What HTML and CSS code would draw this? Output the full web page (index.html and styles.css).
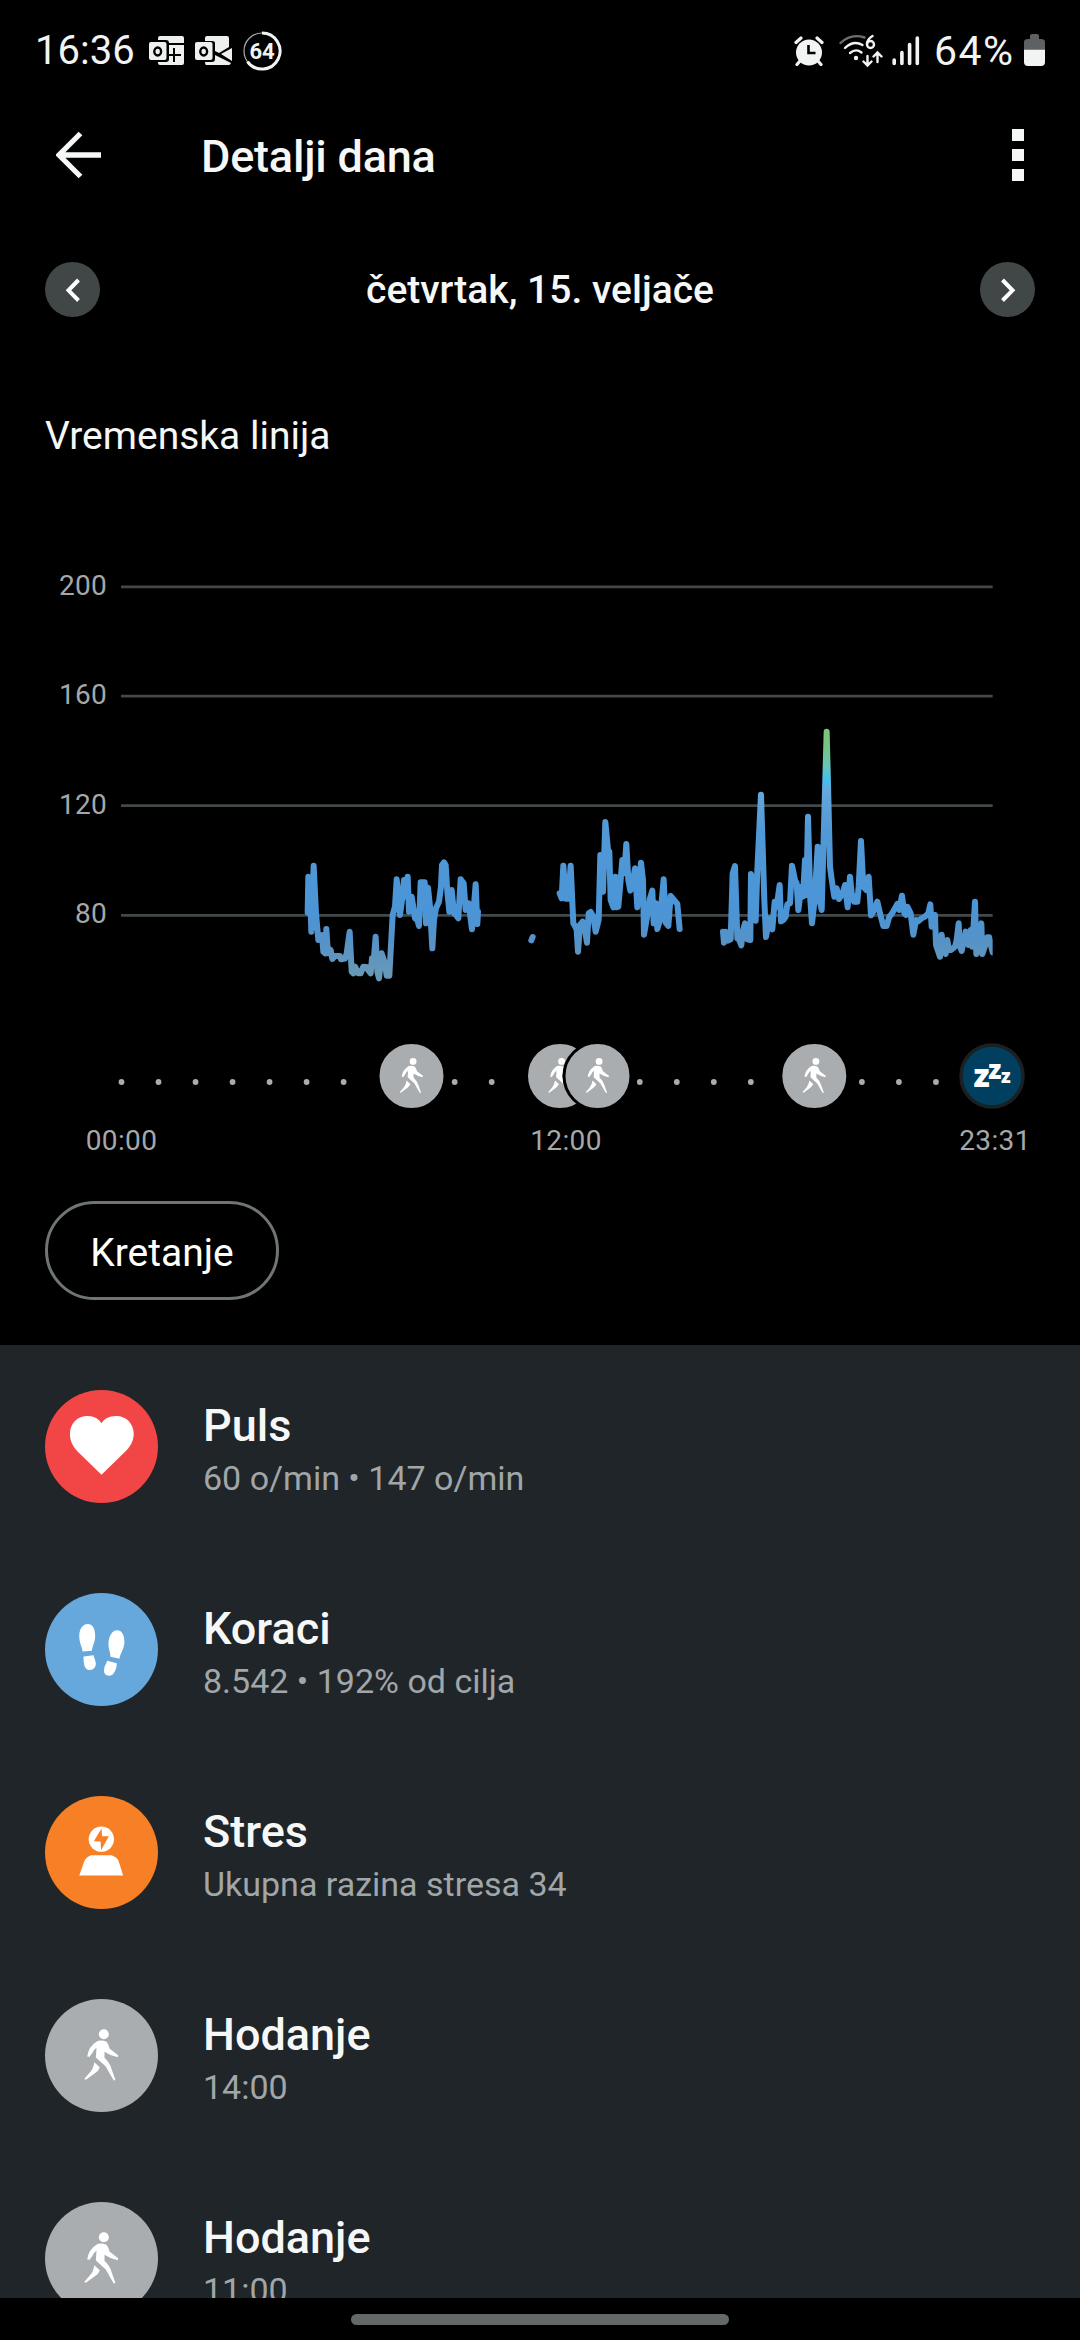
FILE: index.html
```html
<!DOCTYPE html>
<html lang="hr">
<head>
  <meta charset="UTF-8">
  <meta name="viewport" content="width=device-width, initial-scale=1.0">
  <title>Detalji dana</title>
  <link rel="stylesheet" href="styles.css">
</head>
<body>
  <!-- shared icons -->
  <svg class="defs" width="0" height="0">
    <symbol id="walk" viewBox="234 796 140 180">
      <circle cx="311" cy="822" r="15"/>
      <path d="M292 842 Q306 839 319 845 Q325 852 328 865 L354 885 L353 891 Q332 888 313 875 L313 893 Q329 908 334 926 L346 960 L341 961 Q331 945 317 919 L287 892 L289 863 Q279 870 276 879 L268 890 L261 889 Q263 875 269 864 Q278 850 292 842Z"/>
      <path d="M282 906 L299 921 Q295 932 285 939 L257 959 L252 957 L270 936 Q280 925 282 906Z"/>
    </symbol>
  </svg>

  <div class="status-bar">
    <div class="status-left">
      <span class="clock">16:36</span>
      <svg class="outlook" width="36" height="30" viewBox="0 0 36 30">
        <path fill="#eef0f0" d="M11 0h22q2 0 2 2v5H20q0-3-3-3H9V2q0-2 2-2zM20 9h15v18q0 2-2 2H11q-2 0-2-2v-1h8q3 0 3-3z"/>
        <rect x="0" y="6" width="17.500" height="18" rx="2" fill="#eef0f0"/>
        <path d="M25 12v14M19 19h13" stroke="#000" stroke-width="2"/>
        <ellipse cx="8.700" cy="15.500" rx="3.400" ry="4" fill="none" stroke="#000" stroke-width="2.400"/>
      </svg>
      <svg class="outlook" width="38" height="30" viewBox="0 0 38 30">
        <path fill="#eef0f0" d="M12 0h20q2 0 2 2v9l-10 6-4-2V7q0-2-3-2H10V2q0-2 2-2zM37 12v13l-11-7zM20 19l16 8q-1 2-2 2H11q-1 0-1-3h7q3 0 3-3z"/>
        <rect x="0" y="6" width="17.500" height="18" rx="2" fill="#eef0f0"/>
        <ellipse cx="8.700" cy="15.500" rx="3.400" ry="4" fill="none" stroke="#000" stroke-width="2.400"/>
      </svg>
      <svg class="ring" width="40" height="40" viewBox="0 0 40 40">
        <circle cx="20" cy="20" r="18" fill="none" stroke="#aaa" stroke-width="1.200"/>
        <path d="M20 2A18 18 0 1 1 5.400 30.500" fill="none" stroke="#f2f4f4" stroke-width="3"/>
        <text class="ring-text" x="20" y="28" text-anchor="middle">64</text>
      </svg>
    </div>
    <div class="status-right">
      <svg class="alarm" width="30" height="30" viewBox="0 0 30 30">
        <circle cx="15" cy="16.500" r="13" fill="#f2f4f4"/>
        <path d="M2 6.500l5-4.500M28 6.500l-5-4.500M6 25l-3 3.500M24 25l3 3.500" stroke="#f2f4f4" stroke-width="3.200" stroke-linecap="round"/>
        <path d="M14.500 9v8h7" fill="none" stroke="#000" stroke-width="2.600"/>
      </svg>
      <svg class="wifi" width="44" height="34" viewBox="0 0 44 34">
        <g fill="none" stroke="#f2f4f4" stroke-width="2.400" stroke-linecap="round">
          <path d="M1.500 9Q12-1 25.500 3.500" stroke="#6b6f71"/>
          <path d="M6 14Q14.500 6 23.500 11"/>
          <path d="M11 19Q17 14 22.500 18.500"/>
          <path d="M28.500 22v9M24.500 27.500l4 4 4-4M38.500 28v-9M34.500 22.500l4-4 4 4"/>
          <path d="M33.500 2Q28 5.500 28 10"/>
          <circle cx="31.500" cy="10.500" r="3.500"/>
        </g>
        <circle cx="17" cy="24" r="2.200" fill="#f2f4f4"/>
      </svg>
      <svg class="signal" width="28" height="30" viewBox="0 0 28 30">
        <path d="M2.200 24v3.500M9.900 16.500v11M17.600 8.500v19M25.300 2v25.500" stroke="#f2f4f4" stroke-width="3.600" stroke-linecap="round"/>
      </svg>
      <span class="percent">64%</span>
      <svg class="battery" width="21" height="32" viewBox="0 0 21 32">
        <path d="M6 5V2q0-2 2-2h5q2 0 2 2v3h2q4 0 4 3v8H0V8q0-3 4-3z" fill="#5d6163"/>
        <path d="M0 15.700h21V28q0 4-4 4H4q-4 0-4-4z" fill="#f2f4f4"/>
      </svg>
    </div>
  </div>

  <header class="app-bar">
    <svg width="46" height="48" viewBox="0 0 46 48">
      <path d="M24.500 2.500L3 24l21.500 21.500M3 24h42" fill="none" stroke="#f6f7f7" stroke-width="5.300"/>
    </svg>
    <h1>Detalji dana</h1>
    <div class="menu"><i></i><i></i><i></i></div>
  </header>

  <div class="day-nav">
    <button class="nav-btn">
      <svg width="55" height="56" viewBox="0 0 55 56"><path d="M33.500 18L23.500 28.300l10 10.200" fill="none" stroke="#fff" stroke-width="4"/></svg>
    </button>
    <h2>četvrtak, 15. veljače</h2>
    <button class="nav-btn">
      <svg width="55" height="56" viewBox="0 0 55 56"><path d="M22.500 18l10 10.300-10 10.200" fill="none" stroke="#fff" stroke-width="4"/></svg>
    </button>
  </div>

  <h3 class="section-title">Vremenska linija</h3>

  <svg class="chart" width="1080" height="650" viewBox="0 0 1080 650">
    <defs>
      <linearGradient id="pulse" gradientUnits="userSpaceOnUse" x1="0" y1="90" x2="0" y2="840">
        <stop offset="0" stop-color="#80c47a"/>
        <stop offset="0.060" stop-color="#75c57f"/>
        <stop offset="0.140" stop-color="#66c8b6"/>
        <stop offset="0.200" stop-color="#45c0ee"/>
        <stop offset="0.240" stop-color="#66a8dc"/>
        <stop offset="0.400" stop-color="#5198d6"/>
        <stop offset="0.730" stop-color="#4b95d6"/>
        <stop offset="0.840" stop-color="#5592c8"/>
        <stop offset="0.960" stop-color="#6698b8"/>
      </linearGradient>
      <clipPath id="plot"><rect x="0" y="0" width="2978" height="900"/></clipPath>
    </defs>

    <path class="grid" d="M121 66.800H992.700M121 176.200H992.700M121 285.700H992.700M121 395.300H992.700"/>
    <g class="y-labels">
      <text x="107" y="74.500">200</text>
      <text x="107" y="184">160</text>
      <text x="107" y="293.500">120</text>
      <text x="107" y="402.700">80</text>
    </g>

    <!-- heart rate, one path per uninterrupted measurement -->
    <g transform="translate(0 180) scale(0.33333)" clip-path="url(#plot)">
      <g class="rate">
        <path transform="translate(870 0)" d="M53 638L55 530L60 560L64 695L71 497L78 640L85 720L90 718L96 705L100 755L106 760L109 687L114 760L122 750L127 777L135 768L150 768L153 778L165 776L170 760L179 695L185 815L190 820L195 800L205 820L212 820L220 800L232 802L234 810L242 820L246 775L250 795L257 710L262 815L267 835L275 760L285 790L290 827L298 827L308 645L315 620L320 538L330 645L336 600L342 540L348 590L353 530L357 635L365 590L375 655L382 660L387 678L392 547L404 547L408 670L414 563L420 620L427 745L432 660L438 625L447 605L453 560L456 495L462 487L467 495L472 575L478 635L485 570L492 640L498 645L505 655L512 538L521 550L527 630L536 610L546 688L557 553L562 672L564 635"/>
        <path transform="translate(1500 0)" d="M94 721L98 711M179 580L185 595L190 497L197 596L205 596L212 497L220 670L226 680L230 690L234 755L240 675L248 665L255 690L261 728L266 640L272 636L280 650L287 695L296 660L301 465L309 575L316 366L325 460L328 455L332 600L340 622L346 530L350 622L355 620L362 540L367 480L373 520L379 432L385 540L391 572L398 550L405 505L412 622L423 488L429 540L432 704L438 670L450 595L457 572L461 670L468 610L472 687L480 660L491 538L497 668L505 678L512 588L522 600L532 612L539 687"/>
        <path transform="translate(2100 0)" d="M69 695L72 728L77 695L83 722L92 718L98 520L105 498L112 715L118 720L124 736L128 695L135 670L142 718L151 720L153 522L160 560L167 662L172 510L183 284L193 600L198 711L208 655L217 688L224 605L230 620L239 555L243 664L250 660L257 650L262 613L270 610L276 497L285 540L290 550L295 630L304 560L309 590L315 480L319 585L324 350L331 600L336 670L344 600L353 440L359 600L365 630L380 95L384 250L390 500L396 545L403 590L410 565L417 597L428 580L435 555L443 622L450 530L455 580L462 605L472 605L476 560L483 423L490 560L499 570L506 530L513 646L520 635L532 605L540 640L550 678L560 678L568 650L575 642L585 625L592 612L598 630L606 587L613 640L618 645L622 620L632 640L640 704L648 660L655 664L665 655L675 650L685 640L691 613L695 680L705 645L708 735L720 770L725 704L730 755L737 762L742 720L747 750L753 750L765 740L770 720L776 670L779 735L785 753L797 695L805 735L812 690L817 740L825 605L829 762L838 700L844 670L847 762L856 735L862 712L868 712L875 745L878 757"/>
      </g>
    </g>

    <!-- hour dots -->
    <path class="dots" d="M121.500 562H975"/>

    <g class="marker">
      <circle cx="411.500" cy="556" r="33.500"/>
      <use href="#walk" x="395.500" y="535.500" width="32" height="41"/>
      <circle cx="560" cy="556" r="33.500"/>
      <use href="#walk" x="544" y="535.500" width="32" height="41"/>
      <circle cx="597.500" cy="556" r="33.500"/>
      <use href="#walk" x="581.500" y="535.500" width="32" height="41"/>
      <circle cx="814.300" cy="556" r="33.500"/>
      <use href="#walk" x="798.300" y="535.500" width="32" height="41"/>
    </g>
    <circle class="sleep" cx="992" cy="556" r="31"/>
    <g class="zzz">
      <text x="973.500" y="567.300" font-size="32">z</text>
      <text x="988.300" y="559" font-size="26">z</text>
      <text x="1001" y="562.700" font-size="19">z</text>
    </g>

    <g class="x-labels">
      <text x="121.500" y="630">00:00</text>
      <text x="566" y="630">12:00</text>
      <text x="995" y="630">23:31</text>
    </g>
  </svg>

  <div class="filters">
    <button class="chip">Kretanje</button>
  </div>

  <ul class="list">
    <li>
      <svg class="icon red" viewBox="134 90 340 340">
        <path d="M304 345L232 275C216 258 209 242 209 222C209 190 232 168 262 168C282 168 296 177 304 190C312 177 326 168 348 168C380 168 401 192 401 222C401 242 392 259 378 273Z"/>
      </svg>
      <div class="info">
        <h4>Puls</h4>
        <p>60 o/min • 147 o/min</p>
      </div>
    </li>
    <li>
      <svg class="icon blue" viewBox="134 698 340 340">
        <path d="M263 791C278 791 285 806 285 828C285 845 276 858 275 872L247 874C246 860 237 848 237 828C237 805 248 791 263 791Z"/>
        <path d="M250 889L280 885C283 895 287 903 287 912C286 924 278 930 268 930C256 930 249 918 250 889Z"/>
        <path d="M351 810C365 810 373 824 373 845C372 870 360 880 358 896L331 890C331 875 325 870 325 850C326 826 337 810 351 810Z"/>
        <path d="M321 902L350 909C350 925 342 947 327 947C315 947 310 938 312 926C313 916 319 911 321 902Z"/>
      </svg>
      <div class="info">
        <h4>Koraci</h4>
        <p>8.542 • 192% od cilja</p>
      </div>
    </li>
    <li>
      <svg class="icon orange" viewBox="134 108 340 340">
        <circle cx="303.500" cy="238" r="38"/>
        <path class="bolt" d="M304 206L281 244L301 245L303 271L326 229L306 229Z"/>
        <path d="M272 286H334Q352 292 356 305L369 347H237L252 305Q257 292 272 286Z"/>
      </svg>
      <div class="info">
        <h4>Stres</h4>
        <p>Ukupna razina stresa 34</p>
      </div>
    </li>
    <li>
      <svg class="icon gray" viewBox="134 716 340 340">
        <use href="#walk" x="234" y="796" width="140" height="180"/>
      </svg>
      <div class="info">
        <h4>Hodanje</h4>
        <p>14:00</p>
      </div>
    </li>
    <li>
      <svg class="icon gray" viewBox="134 716 340 340">
        <use href="#walk" x="234" y="796" width="140" height="180"/>
      </svg>
      <div class="info">
        <h4>Hodanje</h4>
        <p>11:00</p>
      </div>
    </li>
  </ul>

  <div class="home-bar"><span class="handle"></span></div>
</body>
</html>
```
FILE: styles.css
```css
* {
  box-sizing: border-box;
  margin: 0;
  padding: 0;
}

body {
  display: flex;
  flex-direction: column;
  width: 1080px;
  height: 2340px;
  overflow: hidden;
  background: #000;
  color: #f6f7f7;
  font-family: Roboto, sans-serif;
}

svg {
  display: block;
  flex: none;
}

.defs {
  position: absolute;
}

/* status bar */
.status-bar {
  display: flex;
  justify-content: space-between;
  height: 102px;
  padding: 0 35px;
  font-size: 40px;
  line-height: 102px;
  color: #f2f4f4;
}

.status-left,
.status-right {
  display: flex;
  align-items: center;
}

.clock {
  width: 114px;
}

.outlook {
  margin-right: 10px;
}

.ring {
  margin-left: -1px;
}

.ring-text {
  font-size: 22px;
  font-weight: 700;
  fill: #f2f4f4;
}

.wifi {
  margin-left: 15px;
}

.signal {
  margin-left: 9px;
}

.percent {
  width: 84px;
  margin: 0 6px 0 14px;
  font-size: 41px;
  letter-spacing: 1.5px;
}

.battery {
  margin-top: -2px;
}

/* header */
.app-bar {
  display: flex;
  align-items: center;
  height: 106px;
  padding: 0 56px;
}

.app-bar h1 {
  flex: 1;
  margin-left: 99px;
  font-size: 45px;
  font-weight: 500;
  letter-spacing: -0.2px;
  line-height: 60px;
  padding-top: 3px;
}

.menu {
  display: flex;
  flex-direction: column;
  gap: 8px;
}

.menu i {
  width: 12px;
  height: 12px;
  background: #f6f7f7;
}

/* date */
.day-nav {
  display: flex;
  align-items: center;
  justify-content: space-between;
  height: 55px;
  margin-top: 54px;
  padding: 0 45px;
}

.day-nav h2 {
  padding-top: 1px;
  font-size: 39px;
  font-weight: 500;
  line-height: 56px;
}

.nav-btn {
  width: 55px;
  height: 55px;
  border: none;
  border-radius: 50%;
  background: #414647;
}

.section-title {
  height: 60px;
  margin: 89px 45px 54px;
  font-size: 39px;
  font-weight: 400;
  line-height: 60px;
}

/* timeline chart */
.grid {
  stroke: #43484a;
  stroke-width: 2.7;
}

.y-labels {
  font-size: 28px;
  letter-spacing: 0.3px;
  fill: #a4a8aa;
  text-anchor: end;
}

.x-labels {
  font-size: 28px;
  letter-spacing: 0.4px;
  fill: #a4a8aa;
  text-anchor: middle;
}

.rate path {
  fill: none;
  stroke: url(#pulse);
  stroke-width: 18;
  stroke-linecap: round;
  stroke-linejoin: round;
}

.dots {
  stroke: #a9adaf;
  stroke-width: 5.8;
  stroke-linecap: round;
  stroke-dasharray: 0 37.02;
}

.marker circle {
  fill: #a9adaf;
  stroke: #000;
  stroke-width: 3;
}

.marker use {
  fill: #fff;
}

.sleep {
  fill: #003f5f;
  stroke: #1b2023;
  stroke-width: 3.5;
}

.zzz {
  font-family: "Open Sans", sans-serif;
  font-weight: 800;
  fill: #fff;
}

.filters {
  height: 175px;
  padding: 31px 45px 0;
}

.chip {
  width: 234px;
  height: 99px;
  padding-top: 5px;
  border: 3px solid #6f7577;
  border-radius: 50px;
  background: none;
  color: #fff;
  font-family: inherit;
  font-size: 39px;
}

/* activity list */
.list {
  height: 953px;
  padding: 45px 45px 0;
  overflow: hidden;
  background: #1f2528;
  list-style: none;
}

.list li {
  display: flex;
  height: 203px;
}

.icon {
  width: 113px;
  height: 113px;
  border-radius: 50%;
  fill: #fff;
}

.red {
  background: #f24646;
}

.blue {
  background: #66a7dc;
}

.orange {
  background: #f77f26;
}

.bolt {
  fill: #f77f26;
}

.gray {
  background: #a9adaf;
}

.info {
  margin-left: 45px;
  padding-top: 9px;
}

.info h4 {
  font-size: 45px;
  font-weight: 500;
  line-height: 54px;
}

.info p {
  font-size: 34px;
  line-height: 50px;
  color: #a1a6a8;
}

.home-bar {
  flex: 1;
  padding-top: 16px;
}

.handle {
  display: block;
  width: 378px;
  height: 11px;
  margin: 0 auto;
  border-radius: 6px;
  background: #636869;
}
```
